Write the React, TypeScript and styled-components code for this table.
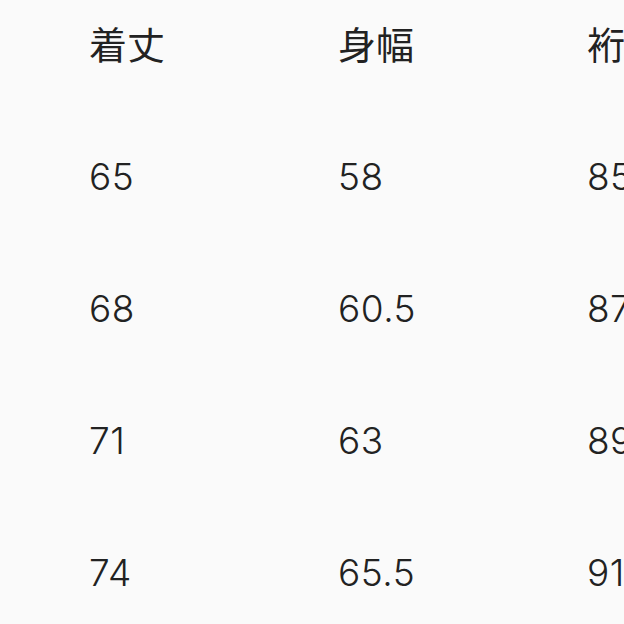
import React from 'react'
import styled, { createGlobalStyle } from 'styled-components'

const GlobalStyle = createGlobalStyle`
  html, body {
    margin: 0;
    padding: 0;
    background: #fafafa;
    overflow: hidden;
  }
`

const headers = ['着丈', '身幅', '裄丈']
const rows = [
  ['65', '58', '85'],
  ['68', '60.5', '87'],
  ['71', '63', '89'],
  ['74', '65.5', '91'],
]

const Table = styled.div`
  display: grid;
  grid-template-columns: repeat(3, 249px);
  grid-auto-rows: 132px;
  margin-top: -22px;
  padding-left: 89px;
  width: 624px;
  height: 646px;
  box-sizing: border-box;
  overflow: hidden;
  background: #fafafa;
  color: #222;
`

const Cell = styled.div<{ $head?: boolean }>`
  display: flex;
  align-items: center;
  white-space: nowrap;
  font-family: ${(p) =>
    p.$head ? '"Noto Sans CJK JP", sans-serif' : 'Inter, "Noto Sans", sans-serif'};
  font-size: ${(p) => (p.$head ? '38px' : '37px')};
  font-weight: ${(p) => (p.$head ? 400 : 300)};
  letter-spacing: ${(p) => (p.$head ? '0' : '0.5px')};
  margin-top: ${(p) => (p.$head ? '-3px' : '0')};
`

export default function App() {
  return (
    <>
      <GlobalStyle />
      <Table>
        {headers.map((h) => (
          <Cell key={h} $head>
            {h}
          </Cell>
        ))}
        {rows.map((r, i) =>
          r.map((v, j) => <Cell key={`${i}-${j}`}>{v}</Cell>),
        )}
      </Table>
    </>
  )
}
